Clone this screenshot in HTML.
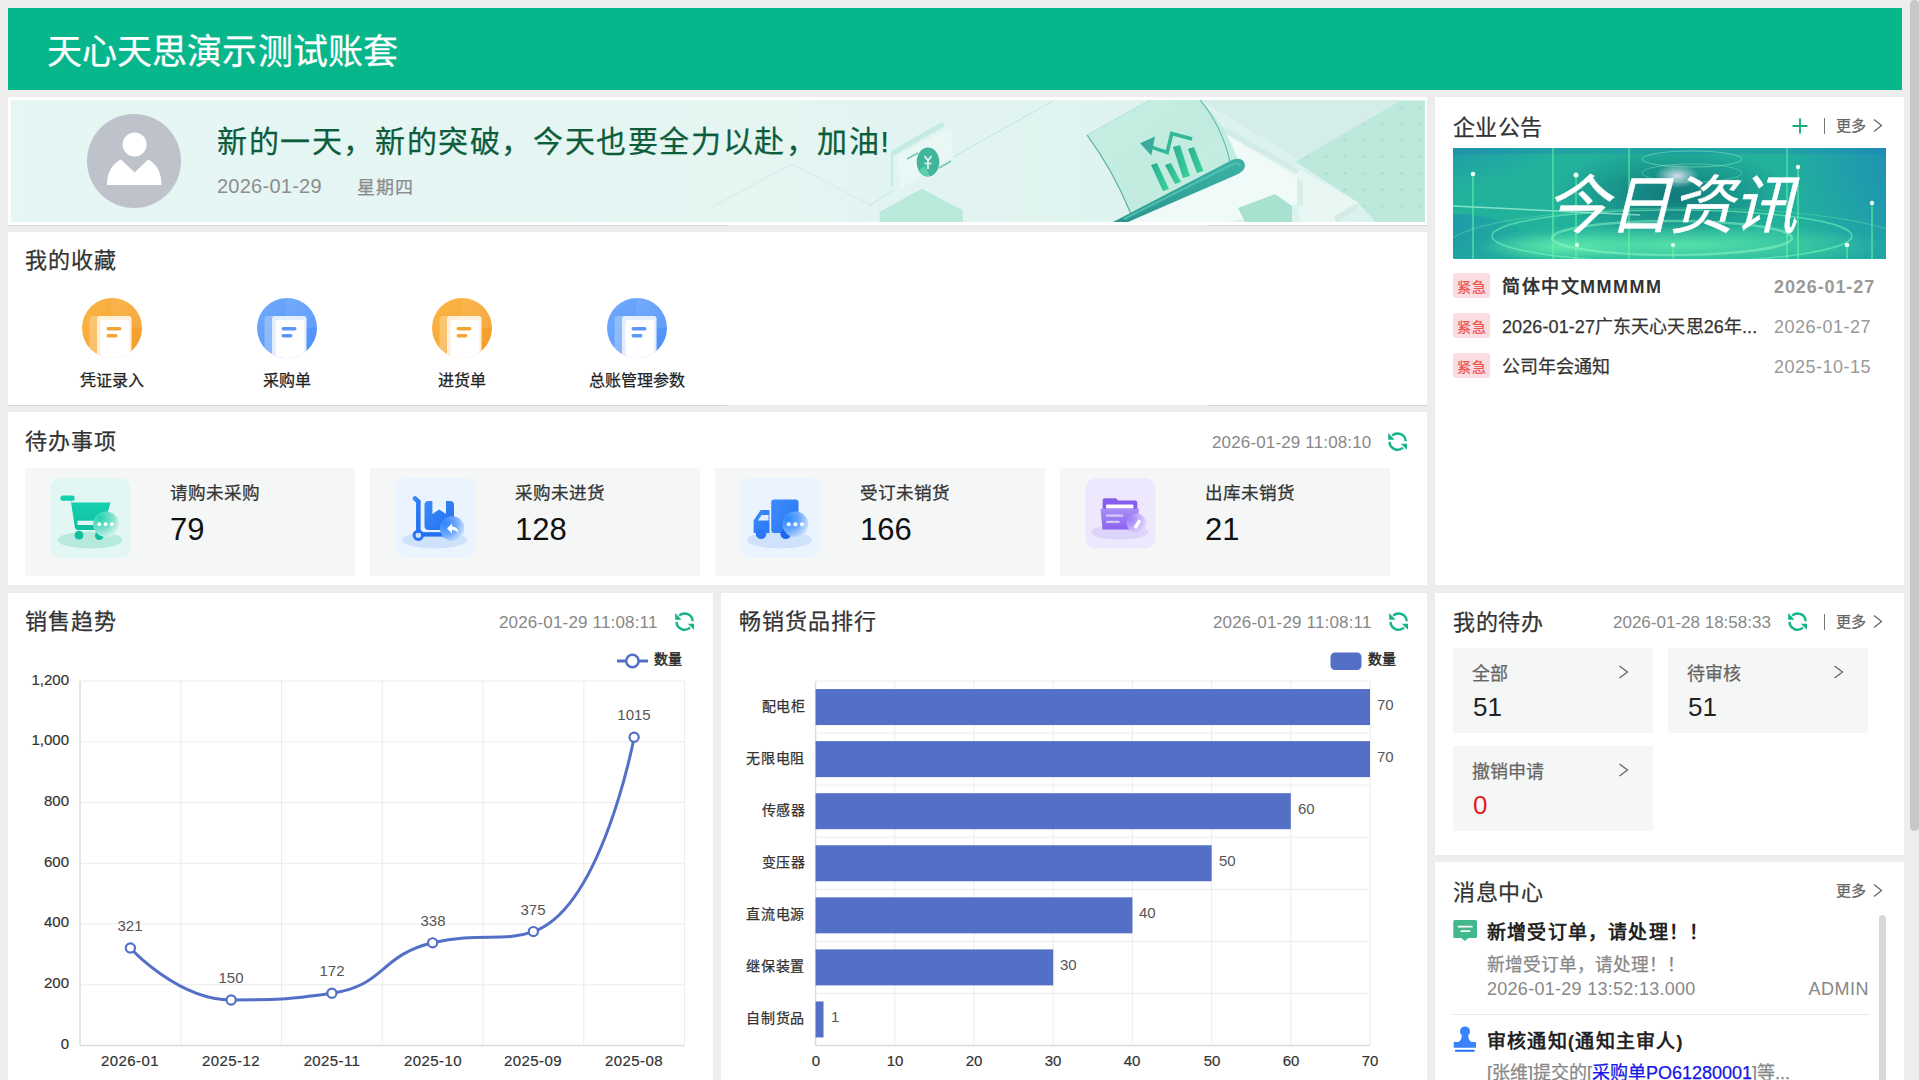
<!DOCTYPE html><html lang="zh-CN"><head><meta charset="utf-8"><style>
html,body{margin:0;padding:0;width:1919px;height:1080px;overflow:hidden;background:#ededed;font-family:"Liberation Sans",sans-serif;}
.t{position:absolute;white-space:nowrap;-webkit-text-stroke:0.25px currentColor;}
.r{position:absolute;}
svg{position:absolute;}
</style></head><body>
<div class="r" style="left:8px;top:8px;width:1894px;height:82px;background:#08b68b;"></div><div class="t" style="left:47px;top:34px;font-size:35px;line-height:35px;color:#fff;letter-spacing:0.1px;">天心天思演示测试账套</div><div class="r" style="left:8px;top:97px;width:1419px;height:128px;background:#fff;"></div><div class="r" style="left:8px;top:225px;width:719px;height:1px;background:#d4d4d4;"></div><div class="r" style="left:1207px;top:225px;width:220px;height:1px;background:#d4d4d4;"></div><div class="r" style="left:8px;top:232px;width:1419px;height:173px;background:#fff;"></div><div class="r" style="left:8px;top:405px;width:719px;height:1px;background:#d4d4d4;"></div><div class="r" style="left:1207px;top:405px;width:220px;height:1px;background:#d4d4d4;"></div><div class="r" style="left:8px;top:412px;width:1419px;height:173px;background:#fff;"></div><div class="r" style="left:8px;top:593px;width:705px;height:487px;background:#fff;"></div><div class="r" style="left:721px;top:593px;width:706px;height:487px;background:#fff;"></div><div class="r" style="left:1435px;top:97px;width:469px;height:488px;background:#fff;"></div><div class="r" style="left:1435px;top:593px;width:469px;height:262px;background:#fff;"></div><div class="r" style="left:1435px;top:862px;width:469px;height:218px;background:#fff;"></div><div class="r" style="left:1910px;top:0px;width:9px;height:831px;background:#c8c8c8;border-radius:5px;"></div><svg style="left:11px;top:100px" width="1414" height="122" viewBox="11 100 1414 122">
<defs>
<linearGradient id="bg1" x1="0" y1="0" x2="1" y2="0"><stop offset="0" stop-color="#e6f6f4"/><stop offset="0.55" stop-color="#e4f5f2"/><stop offset="1" stop-color="#d9f1ec"/></linearGradient>
<linearGradient id="rol" x1="0" y1="1" x2="0.3" y2="0"><stop offset="0" stop-color="#2a968f"/><stop offset="1" stop-color="#3aafa3"/></linearGradient>
<linearGradient id="bar" x1="0" y1="0" x2="1" y2="0"><stop offset="0" stop-color="#2eaa94"/><stop offset="1" stop-color="#39d69c"/></linearGradient>
<linearGradient id="ppr" x1="0" y1="0" x2="1" y2="1"><stop offset="0" stop-color="#c2ecdf"/><stop offset="1" stop-color="#b4e8d8"/></linearGradient>
<pattern id="dots" x="0" y="0" width="18.8" height="16.5" patternUnits="userSpaceOnUse"><path d="M8.5,9 l1.6,-1.3 l1.6,1.3" stroke="#8fd3c0" stroke-width="0.9" fill="none"/></pattern>
</defs>
<rect x="11" y="100" width="1414" height="122" fill="url(#bg1)"/>
<polygon points="1200,100 1425,100 1425,160 1300,160" fill="#d4ede8"/>
<line x1="1053" y1="101" x2="953" y2="157" stroke="#c2e5dd" stroke-width="1"/>
<line x1="869" y1="206" x2="895" y2="189" stroke="#c6e8e0" stroke-width="1"/>
<polyline points="712,207 792,164 872,206" stroke="#d2ebe5" stroke-width="1" fill="none"/>
<polygon points="891,151 942,122 945,126 893,156 893,186 891,187" fill="#c4eae2"/>
<polygon points="898.5,155.4 951.4,127.5 953,156.9 900,188.7" fill="#e9f8f5"/>
<ellipse cx="928" cy="162" rx="11.3" ry="14.4" fill="#40b59c"/>
<path d="M918,170 A11,14 0 0 0 930,176 L925,166 Z" fill="#5ccfae"/>
<path d="M924.5,156 L928,160.5 L931.5,156 M928,160.5 L928,169 M924.5,163.5 L931.5,163.5" stroke="#e6f7f1" stroke-width="1.7" fill="none"/>
<line x1="907" y1="159" x2="918" y2="153" stroke="#7cc5b4" stroke-width="1.6"/>
<line x1="939" y1="168" x2="951" y2="161" stroke="#7cc5b4" stroke-width="1.6"/>
<polygon points="879.6,212 922,188.7 962.8,210.6 962.8,222 879.6,222" fill="#b8e9db"/>
<polygon points="1295.7,161.5 1400,101 1425,101 1425,222 1375.8,222 1357.6,202.3" fill="#bde8dc"/>
<polygon points="1295.7,161.5 1400,101 1425,101 1425,222 1375.8,222 1357.6,202.3" fill="url(#dots)"/>
<polygon points="1224,126 1300,170 1357.6,202.3 1357.6,210 1336,222 1300,222 1297,178 1220,133" fill="#e9f7f4"/>
<polygon points="1224,126 1300,170 1296,174 1221,131" fill="#d3ece6"/>
<polygon points="1336,222 1357.6,210 1357.6,203 1334,216" fill="#d2ebe5"/>
<polygon points="1221,132 1297,178 1297,204 1230.7,222 1130,222" fill="#f0faf8"/>
<polygon points="1297,178 1303,181 1303,206 1297,204" fill="#d6efe9"/>
<polygon points="1238,208 1275,194 1292,206 1292,222 1245,222" fill="#a8e1d0"/>
<path d="M1087,135 Q1113,170 1131,214 L1240,165 Q1226,125 1200,100 L1150,100 Z" fill="url(#ppr)" fill-opacity="0.8"/>
<path d="M1087,135 Q1113,170 1131,214" stroke="#4fae9f" stroke-width="1.2" fill="none"/>
<path d="M1200,100 Q1222,126 1230,162" stroke="#5db8aa" stroke-width="1.1" fill="none"/>
<path d="M1087,135 L1150,100" stroke="#b0e2d6" stroke-width="1" fill="none"/>
<polygon points="1151,165 1157,163 1169,189 1163,191" fill="url(#bar)"/>
<polygon points="1165,165 1171,163 1181,182 1175,184" fill="url(#bar)"/>
<polygon points="1173,147 1180,145 1190,176 1183,178" fill="url(#bar)"/>
<polygon points="1188,149 1194,147 1203.5,171 1197,173" fill="url(#bar)"/>
<polyline points="1149,146.4 1167.2,152.4 1171.7,133.5 1192.1,139" stroke="#33b899" stroke-width="3.6" fill="none" stroke-linejoin="miter"/>
<polygon points="1140,143.3 1155,136.5 1151.3,155.4" fill="#3aab9a"/>
<path d="M1113,222 L1232,160 Q1244,156 1245,166 Q1244,172 1236,175 L1128,222 Z" fill="url(#rol)"/>
<path d="M1124,219 L1233,164 Q1240,162 1240,167" stroke="#55c4b5" stroke-width="2" fill="none" stroke-opacity="0.8"/>
</svg><svg style="left:86px;top:113px" width="96" height="96" viewBox="86 113 96 96">
<circle cx="134" cy="161" r="47" fill="#bec2cb"/>
<circle cx="134.6" cy="144.4" r="12" fill="#fff"/>
<path d="M107,185 C107,173 112,164 121,159.6 L134.6,172.5 L148,159.6 C157,164 161.5,173 161.5,185 Z" fill="#fff"/>
</svg><div class="t" style="left:217px;top:127px;font-size:30px;line-height:30px;color:#0d5c3c;letter-spacing:1.6px;">新的一天，新的突破，今天也要全力以赴，加油!</div><div class="t" style="left:217px;top:176px;font-size:20px;line-height:20px;color:#8d8d8d;letter-spacing:0.25px;-webkit-text-stroke:0;">2026-01-29</div><div class="t" style="left:357px;top:179px;font-size:18px;line-height:18px;color:#8d8d8d;letter-spacing:1px;">星期四</div><div class="t" style="left:25px;top:250px;font-size:22px;line-height:22px;color:#333;letter-spacing:1px;">我的收藏</div><svg style="left:81px;top:297px" width="62" height="62" viewBox="81 297 62 62">
<defs><linearGradient id="fg112" x1="0" y1="0" x2="1" y2="1"><stop offset="0" stop-color="#fbb848"/><stop offset="1" stop-color="#f39a23"/></linearGradient>
<clipPath id="cfg112"><circle cx="112" cy="328" r="30"/></clipPath></defs>
<circle cx="112" cy="328" r="30" fill="url(#fg112)"/>
<path d="M111,298 A30,30 0 0 1 142,328 L111,328 Z" fill="#fff" fill-opacity="0.08"/>
<g clip-path="url(#cfg112)">
<rect x="89.5" y="316" width="42" height="45" rx="3" fill="#fff" fill-opacity="0.28"/>
<rect x="97" y="316" width="34.5" height="45" rx="3" fill="#fff" fill-opacity="0.75"/>
<rect x="100.5" y="320" width="29" height="41" rx="3" fill="#fff"/>
</g>
<rect x="106.5" y="327" width="15" height="3.4" rx="1.7" fill="#f4a537"/>
<rect x="106.5" y="334" width="11" height="3.4" rx="1.7" fill="#f4a537"/>
</svg><div class="t" style="left:112px;top:373px;font-size:16px;line-height:16px;color:#222;transform:translateX(-50%);">凭证录入</div><svg style="left:256px;top:297px" width="62" height="62" viewBox="256 297 62 62">
<defs><linearGradient id="fg287" x1="0" y1="0" x2="1" y2="1"><stop offset="0" stop-color="#72acfc"/><stop offset="1" stop-color="#4a8df8"/></linearGradient>
<clipPath id="cfg287"><circle cx="287" cy="328" r="30"/></clipPath></defs>
<circle cx="287" cy="328" r="30" fill="url(#fg287)"/>
<path d="M286,298 A30,30 0 0 1 317,328 L286,328 Z" fill="#fff" fill-opacity="0.08"/>
<g clip-path="url(#cfg287)">
<rect x="264.5" y="316" width="42" height="45" rx="3" fill="#fff" fill-opacity="0.28"/>
<rect x="272" y="316" width="34.5" height="45" rx="3" fill="#fff" fill-opacity="0.75"/>
<rect x="275.5" y="320" width="29" height="41" rx="3" fill="#fff"/>
</g>
<rect x="281.5" y="327" width="15" height="3.4" rx="1.7" fill="#5b97f8"/>
<rect x="281.5" y="334" width="11" height="3.4" rx="1.7" fill="#5b97f8"/>
</svg><div class="t" style="left:287px;top:373px;font-size:16px;line-height:16px;color:#222;transform:translateX(-50%);">采购单</div><svg style="left:431px;top:297px" width="62" height="62" viewBox="431 297 62 62">
<defs><linearGradient id="fg462" x1="0" y1="0" x2="1" y2="1"><stop offset="0" stop-color="#fbb848"/><stop offset="1" stop-color="#f39a23"/></linearGradient>
<clipPath id="cfg462"><circle cx="462" cy="328" r="30"/></clipPath></defs>
<circle cx="462" cy="328" r="30" fill="url(#fg462)"/>
<path d="M461,298 A30,30 0 0 1 492,328 L461,328 Z" fill="#fff" fill-opacity="0.08"/>
<g clip-path="url(#cfg462)">
<rect x="439.5" y="316" width="42" height="45" rx="3" fill="#fff" fill-opacity="0.28"/>
<rect x="447" y="316" width="34.5" height="45" rx="3" fill="#fff" fill-opacity="0.75"/>
<rect x="450.5" y="320" width="29" height="41" rx="3" fill="#fff"/>
</g>
<rect x="456.5" y="327" width="15" height="3.4" rx="1.7" fill="#f4a537"/>
<rect x="456.5" y="334" width="11" height="3.4" rx="1.7" fill="#f4a537"/>
</svg><div class="t" style="left:462px;top:373px;font-size:16px;line-height:16px;color:#222;transform:translateX(-50%);">进货单</div><svg style="left:606px;top:297px" width="62" height="62" viewBox="606 297 62 62">
<defs><linearGradient id="fg637" x1="0" y1="0" x2="1" y2="1"><stop offset="0" stop-color="#72acfc"/><stop offset="1" stop-color="#4a8df8"/></linearGradient>
<clipPath id="cfg637"><circle cx="637" cy="328" r="30"/></clipPath></defs>
<circle cx="637" cy="328" r="30" fill="url(#fg637)"/>
<path d="M636,298 A30,30 0 0 1 667,328 L636,328 Z" fill="#fff" fill-opacity="0.08"/>
<g clip-path="url(#cfg637)">
<rect x="614.5" y="316" width="42" height="45" rx="3" fill="#fff" fill-opacity="0.28"/>
<rect x="622" y="316" width="34.5" height="45" rx="3" fill="#fff" fill-opacity="0.75"/>
<rect x="625.5" y="320" width="29" height="41" rx="3" fill="#fff"/>
</g>
<rect x="631.5" y="327" width="15" height="3.4" rx="1.7" fill="#5b97f8"/>
<rect x="631.5" y="334" width="11" height="3.4" rx="1.7" fill="#5b97f8"/>
</svg><div class="t" style="left:637px;top:373px;font-size:16px;line-height:16px;color:#222;transform:translateX(-50%);">总账管理参数</div><div class="t" style="left:25px;top:431px;font-size:22px;line-height:22px;color:#333;letter-spacing:1px;">待办事项</div><div class="t" style="left:1212px;top:434px;font-size:17px;line-height:17px;color:#888;letter-spacing:0.15px;-webkit-text-stroke:0;">2026-01-29 11:08:10</div><svg style="left:1383px;top:428px" width="28" height="28" viewBox="0 0 28 28">
<path d="M22.7,13.3 A8.1,8.1 0 0 0 9.2,7.6" stroke="#14b38a" stroke-width="2.4" fill="none"/>
<polygon points="5.2,5.0 5.2,11.8 11.6,11.8" fill="#14b38a"/>
<path d="M6.5,13.9 A8.1,8.1 0 0 0 20.0,19.6" stroke="#14b38a" stroke-width="2.4" fill="none"/>
<polygon points="17.8,15.8 24.0,15.8 24.0,21.8" fill="#14b38a"/>
</svg><div class="r" style="left:25px;top:468px;width:330px;height:108px;background:#f5f7f7;"></div><div class="t" style="left:170px;top:485px;font-size:17.6px;line-height:17.6px;color:#333;">请购未采购</div><div class="t" style="left:170px;top:514px;font-size:31px;line-height:31px;color:#111;-webkit-text-stroke:0;">79</div><div class="r" style="left:370px;top:468px;width:330px;height:108px;background:#f5f7f7;"></div><div class="t" style="left:515px;top:485px;font-size:17.6px;line-height:17.6px;color:#333;">采购未进货</div><div class="t" style="left:515px;top:514px;font-size:31px;line-height:31px;color:#111;-webkit-text-stroke:0;">128</div><div class="r" style="left:715px;top:468px;width:330px;height:108px;background:#f5f7f7;"></div><div class="t" style="left:860px;top:485px;font-size:17.6px;line-height:17.6px;color:#333;">受订未销货</div><div class="t" style="left:860px;top:514px;font-size:31px;line-height:31px;color:#111;-webkit-text-stroke:0;">166</div><div class="r" style="left:1060px;top:468px;width:330px;height:108px;background:#f5f7f7;"></div><div class="t" style="left:1205px;top:485px;font-size:17.6px;line-height:17.6px;color:#333;">出库未销货</div><div class="t" style="left:1205px;top:514px;font-size:31px;line-height:31px;color:#111;-webkit-text-stroke:0;">21</div><svg style="left:50px;top:478px" width="81" height="81" viewBox="0 0 81 81">
<defs><linearGradient id="cartg" x1="0" y1="0" x2="0" y2="1"><stop offset="0" stop-color="#14d2b3"/><stop offset="1" stop-color="#0fbe9e"/></linearGradient>
<radialGradient id="bubg" cx="0.25" cy="0.25" r="0.9"><stop offset="0" stop-color="#22d3b1"/><stop offset="0.55" stop-color="#7ee0cc"/><stop offset="1" stop-color="#e6f8f4"/></radialGradient></defs>
<rect x="0.5" y="0" width="80" height="80" rx="10" fill="#e2f6f3"/>
<ellipse cx="40" cy="62" rx="32.5" ry="8.4" fill="#b8e9dd"/>
<path d="M13,20.2 L22,20.2" stroke="url(#cartg)" stroke-width="5.2" stroke-linecap="round"/>
<path d="M20.5,21 L25,50 Q25.5,52 28,52 L52,52 L60.5,25 Q61,24.5 60,24.5 L21.5,24.5 Z" fill="url(#cartg)"/>
<rect x="27.5" y="42.7" width="17" height="4.3" fill="#e2f6f3"/>
<circle cx="29" cy="57.2" r="4.4" fill="#0fbf9f"/>
<circle cx="49.3" cy="57.6" r="4.4" fill="#0fbf9f"/>
<circle cx="56" cy="46.2" r="12.8" fill="url(#bubg)"/>
<circle cx="49.3" cy="46.2" r="1.9" fill="#fff"/><circle cx="55.6" cy="46.2" r="1.9" fill="#fff"/><circle cx="62" cy="46.2" r="1.9" fill="#fff"/>
</svg><svg style="left:395px;top:478px" width="81" height="81" viewBox="0 0 81 81">
<defs><linearGradient id="dolg" x1="0" y1="0" x2="1" y2="1"><stop offset="0" stop-color="#3a8bf8"/><stop offset="1" stop-color="#2370f2"/></linearGradient>
<radialGradient id="bub2" cx="0.2" cy="0.3" r="0.95"><stop offset="0" stop-color="#2b84ff"/><stop offset="0.5" stop-color="#6fa9fb"/><stop offset="1" stop-color="#e7f1fe"/></radialGradient></defs>
<rect x="0.5" y="0" width="80" height="80" rx="10" fill="#eaf3fe"/>
<ellipse cx="39.6" cy="62" rx="32.5" ry="8.4" fill="#cfe2fc"/>
<path d="M20,20.5 L23.3,23.5 L23.3,53" stroke="url(#dolg)" stroke-width="4.6" stroke-linecap="round" fill="none"/>
<circle cx="23.3" cy="57.2" r="4.2" stroke="#2874f3" stroke-width="3" fill="none"/>
<path d="M27.5,56.4 L49,56.4" stroke="#2370f2" stroke-width="4.4"/>
<path d="M33.5,22.9 L37.4,22.9 L37.4,36 L44.2,31.5 L51,36 L51,22.9 L55,22.9 Q59,22.9 59,27 L59,48 Q59,52 55,52 L33.5,52 Q29.5,52 29.5,48 L29.5,27 Q29.5,22.9 33.5,22.9 Z" fill="url(#dolg)"/>
<circle cx="57.2" cy="50.6" r="12.3" fill="url(#bub2)"/>
<path d="M52,50.6 L57,45.5 L57,48.5 Q63,48.5 63.5,55 Q61,51.5 57,52 L57,55.5 Z" fill="#fff"/>
</svg><svg style="left:740px;top:478px" width="81" height="81" viewBox="0 0 81 81">
<defs><linearGradient id="trg" x1="0" y1="0" x2="1" y2="1"><stop offset="0" stop-color="#3d8cfb"/><stop offset="1" stop-color="#2a77f6"/></linearGradient>
<radialGradient id="bub3" cx="0.2" cy="0.3" r="0.95"><stop offset="0" stop-color="#2b88ff"/><stop offset="0.5" stop-color="#6fabfb"/><stop offset="1" stop-color="#e7f1fe"/></radialGradient></defs>
<rect x="0.5" y="0" width="80" height="80" rx="10" fill="#eaf3fe"/>
<ellipse cx="39.6" cy="62" rx="32.5" ry="8.4" fill="#cfe2fc"/>
<rect x="31.2" y="21.5" width="27.3" height="33.4" rx="3" fill="url(#trg)"/>
<path d="M20.7,32.1 L29.5,32.1 L29.5,54.9 L13.6,54.9 L13.6,42.6 Z" fill="url(#trg)"/>
<path d="M21.5,36.9 L28.6,36.9 L28.6,42.6 L18,42.6 Z" fill="#e3eefd"/>
<circle cx="21.1" cy="55.8" r="5.3" fill="#2b78f6"/>
<circle cx="45.7" cy="55.8" r="5.3" fill="#1d67f0"/>
<circle cx="55.4" cy="46.2" r="12.8" fill="url(#bub3)"/>
<circle cx="48.8" cy="46.2" r="2" fill="#fff"/><circle cx="55.4" cy="46.2" r="2" fill="#fff"/><circle cx="62" cy="46.2" r="2" fill="#fff"/>
</svg><svg style="left:1085px;top:478px" width="71" height="71" viewBox="0 0 71 71">
<defs><linearGradient id="fog" x1="0" y1="0" x2="0" y2="1"><stop offset="0" stop-color="#a98ff8"/><stop offset="1" stop-color="#8a62f0"/></linearGradient>
<radialGradient id="bub4" cx="0.2" cy="0.3" r="0.95"><stop offset="0" stop-color="#a07ef8"/><stop offset="0.5" stop-color="#c3b0fa"/><stop offset="1" stop-color="#ece6fd"/></radialGradient></defs>
<rect x="0.5" y="0.5" width="70" height="70" rx="10" fill="#ede8fd"/>
<ellipse cx="34.7" cy="54.1" rx="28.6" ry="7.5" fill="#ddd4fb"/>
<path d="M19.6,20.2 L31,20.2 L33,22.5 L50.3,22.5 Q52.3,22.5 52.3,24.5 L52.3,32 L17.6,32 L17.6,22.2 Q17.6,20.2 19.6,20.2 Z" fill="#875ff0"/>
<rect x="21" y="26.4" width="27.4" height="4" rx="1" fill="#fff"/>
<path d="M15.5,30.8 L54,30.8 L51.9,51.5 L17.6,51.5 Z" fill="url(#fog)"/>
<rect x="21" y="36.5" width="17.3" height="2.2" rx="1" fill="#fff" fill-opacity="0.6"/>
<rect x="21" y="42.7" width="13.8" height="2.2" rx="1" fill="#fff" fill-opacity="0.6"/>
<circle cx="51.5" cy="45.3" r="9.7" fill="url(#bub4)"/>
<path d="M53.3,41.3 L56.3,43 L51.5,51 L48.5,49.3 Z" fill="#fff"/>
</svg><svg style="left:50px;top:478px" width="30" height="30" viewBox="0 0 30 30"><path d="M13,20.2 L22,20.2" stroke="#13d0b1" stroke-width="5.2" stroke-linecap="round"/></svg><div class="t" style="left:25px;top:611px;font-size:22px;line-height:22px;color:#333;letter-spacing:1px;">销售趋势</div><div class="t" style="left:499px;top:614px;font-size:17px;line-height:17px;color:#888;letter-spacing:0.17px;-webkit-text-stroke:0;">2026-01-29 11:08:11</div><svg style="left:670px;top:608px" width="28" height="28" viewBox="0 0 28 28">
<path d="M22.7,13.3 A8.1,8.1 0 0 0 9.2,7.6" stroke="#14b38a" stroke-width="2.4" fill="none"/>
<polygon points="5.2,5.0 5.2,11.8 11.6,11.8" fill="#14b38a"/>
<path d="M6.5,13.9 A8.1,8.1 0 0 0 20.0,19.6" stroke="#14b38a" stroke-width="2.4" fill="none"/>
<polygon points="17.8,15.8 24.0,15.8 24.0,21.8" fill="#14b38a"/>
</svg><div class="t" style="left:739px;top:611px;font-size:22px;line-height:22px;color:#333;letter-spacing:1px;">畅销货品排行</div><div class="t" style="left:1213px;top:614px;font-size:17px;line-height:17px;color:#888;letter-spacing:0.17px;-webkit-text-stroke:0;">2026-01-29 11:08:11</div><svg style="left:1384px;top:608px" width="28" height="28" viewBox="0 0 28 28">
<path d="M22.7,13.3 A8.1,8.1 0 0 0 9.2,7.6" stroke="#14b38a" stroke-width="2.4" fill="none"/>
<polygon points="5.2,5.0 5.2,11.8 11.6,11.8" fill="#14b38a"/>
<path d="M6.5,13.9 A8.1,8.1 0 0 0 20.0,19.6" stroke="#14b38a" stroke-width="2.4" fill="none"/>
<polygon points="17.8,15.8 24.0,15.8 24.0,21.8" fill="#14b38a"/>
</svg><svg style="left:0px;top:593px" width="713" height="487" viewBox="0 593 713 487"><line x1="80" y1="1045.50" x2="684.5" y2="1045.50" stroke="#ececec" stroke-width="1"/><line x1="80" y1="984.75" x2="684.5" y2="984.75" stroke="#ececec" stroke-width="1"/><line x1="80" y1="924.00" x2="684.5" y2="924.00" stroke="#ececec" stroke-width="1"/><line x1="80" y1="863.25" x2="684.5" y2="863.25" stroke="#ececec" stroke-width="1"/><line x1="80" y1="802.50" x2="684.5" y2="802.50" stroke="#ececec" stroke-width="1"/><line x1="80" y1="741.75" x2="684.5" y2="741.75" stroke="#ececec" stroke-width="1"/><line x1="80" y1="681.00" x2="684.5" y2="681.00" stroke="#ececec" stroke-width="1"/><line x1="180.75" y1="681" x2="180.75" y2="1045.5" stroke="#ececec" stroke-width="1"/><line x1="281.50" y1="681" x2="281.50" y2="1045.5" stroke="#ececec" stroke-width="1"/><line x1="382.25" y1="681" x2="382.25" y2="1045.5" stroke="#ececec" stroke-width="1"/><line x1="483.00" y1="681" x2="483.00" y2="1045.5" stroke="#ececec" stroke-width="1"/><line x1="583.75" y1="681" x2="583.75" y2="1045.5" stroke="#ececec" stroke-width="1"/><line x1="684.50" y1="681" x2="684.50" y2="1045.5" stroke="#ececec" stroke-width="1"/><line x1="80" y1="681" x2="80" y2="1045.5" stroke="#dcdcdc" stroke-width="1.5"/><line x1="80" y1="1045.5" x2="684.5" y2="1045.5" stroke="#dcdcdc" stroke-width="1.5"/><path d="M130.38,948.00 C130.38,948.00 177.84,999.94 231.12,999.94 C278.59,999.94 284.26,999.94 331.88,993.25 C385.01,985.80 379.59,955.32 432.62,942.83 C480.34,931.59 501.49,942.83 533.38,931.59 C602.24,907.32 634.12,737.19 634.12,737.19" stroke="#5470c6" stroke-width="3" fill="none"/><circle cx="130.38" cy="948.00" r="4.6" fill="#fff" stroke="#5470c6" stroke-width="2.2"/><circle cx="231.12" cy="999.94" r="4.6" fill="#fff" stroke="#5470c6" stroke-width="2.2"/><circle cx="331.88" cy="993.25" r="4.6" fill="#fff" stroke="#5470c6" stroke-width="2.2"/><circle cx="432.62" cy="942.83" r="4.6" fill="#fff" stroke="#5470c6" stroke-width="2.2"/><circle cx="533.38" cy="931.59" r="4.6" fill="#fff" stroke="#5470c6" stroke-width="2.2"/><circle cx="634.12" cy="737.19" r="4.6" fill="#fff" stroke="#5470c6" stroke-width="2.2"/><line x1="617" y1="661" x2="648" y2="661" stroke="#5470c6" stroke-width="3"/><circle cx="632.4" cy="661" r="6.2" fill="#fff" stroke="#5470c6" stroke-width="2.6"/></svg><div class="t" style="left:654px;top:652px;font-size:14px;line-height:14px;color:#333;font-weight:bold;-webkit-text-stroke:0;">数量</div><div class="t" style="right:1850px;top:1036px;font-size:15px;line-height:15px;color:#333;-webkit-text-stroke:0;-webkit-text-stroke:0.2px #333;">0</div><div class="t" style="right:1850px;top:975px;font-size:15px;line-height:15px;color:#333;-webkit-text-stroke:0;-webkit-text-stroke:0.2px #333;">200</div><div class="t" style="right:1850px;top:914px;font-size:15px;line-height:15px;color:#333;-webkit-text-stroke:0;-webkit-text-stroke:0.2px #333;">400</div><div class="t" style="right:1850px;top:854px;font-size:15px;line-height:15px;color:#333;-webkit-text-stroke:0;-webkit-text-stroke:0.2px #333;">600</div><div class="t" style="right:1850px;top:793px;font-size:15px;line-height:15px;color:#333;-webkit-text-stroke:0;-webkit-text-stroke:0.2px #333;">800</div><div class="t" style="right:1850px;top:732px;font-size:15px;line-height:15px;color:#333;-webkit-text-stroke:0;-webkit-text-stroke:0.2px #333;">1,000</div><div class="t" style="right:1850px;top:672px;font-size:15px;line-height:15px;color:#333;-webkit-text-stroke:0;-webkit-text-stroke:0.2px #333;">1,200</div><div class="t" style="left:130px;top:1053px;font-size:15px;line-height:15px;color:#333;letter-spacing:0.4px;transform:translateX(-50%);-webkit-text-stroke:0;-webkit-text-stroke:0.2px #333;">2026-01</div><div class="t" style="left:231px;top:1053px;font-size:15px;line-height:15px;color:#333;letter-spacing:0.4px;transform:translateX(-50%);-webkit-text-stroke:0;-webkit-text-stroke:0.2px #333;">2025-12</div><div class="t" style="left:332px;top:1053px;font-size:15px;line-height:15px;color:#333;letter-spacing:0.4px;transform:translateX(-50%);-webkit-text-stroke:0;-webkit-text-stroke:0.2px #333;">2025-11</div><div class="t" style="left:433px;top:1053px;font-size:15px;line-height:15px;color:#333;letter-spacing:0.4px;transform:translateX(-50%);-webkit-text-stroke:0;-webkit-text-stroke:0.2px #333;">2025-10</div><div class="t" style="left:533px;top:1053px;font-size:15px;line-height:15px;color:#333;letter-spacing:0.4px;transform:translateX(-50%);-webkit-text-stroke:0;-webkit-text-stroke:0.2px #333;">2025-09</div><div class="t" style="left:634px;top:1053px;font-size:15px;line-height:15px;color:#333;letter-spacing:0.4px;transform:translateX(-50%);-webkit-text-stroke:0;-webkit-text-stroke:0.2px #333;">2025-08</div><div class="t" style="left:130px;top:918px;font-size:15px;line-height:15px;color:#555;transform:translateX(-50%);-webkit-text-stroke:0;">321</div><div class="t" style="left:231px;top:970px;font-size:15px;line-height:15px;color:#555;transform:translateX(-50%);-webkit-text-stroke:0;">150</div><div class="t" style="left:332px;top:963px;font-size:15px;line-height:15px;color:#555;transform:translateX(-50%);-webkit-text-stroke:0;">172</div><div class="t" style="left:433px;top:913px;font-size:15px;line-height:15px;color:#555;transform:translateX(-50%);-webkit-text-stroke:0;">338</div><div class="t" style="left:533px;top:902px;font-size:15px;line-height:15px;color:#555;transform:translateX(-50%);-webkit-text-stroke:0;">375</div><div class="t" style="left:634px;top:707px;font-size:15px;line-height:15px;color:#555;transform:translateX(-50%);-webkit-text-stroke:0;">1015</div><svg style="left:721px;top:593px" width="706" height="487" viewBox="721 593 706 487"><line x1="815.6" y1="681.00" x2="1370" y2="681.00" stroke="#ececec" stroke-width="1"/><line x1="815.6" y1="733.07" x2="1370" y2="733.07" stroke="#ececec" stroke-width="1"/><line x1="815.6" y1="785.14" x2="1370" y2="785.14" stroke="#ececec" stroke-width="1"/><line x1="815.6" y1="837.21" x2="1370" y2="837.21" stroke="#ececec" stroke-width="1"/><line x1="815.6" y1="889.29" x2="1370" y2="889.29" stroke="#ececec" stroke-width="1"/><line x1="815.6" y1="941.36" x2="1370" y2="941.36" stroke="#ececec" stroke-width="1"/><line x1="815.6" y1="993.43" x2="1370" y2="993.43" stroke="#ececec" stroke-width="1"/><line x1="815.6" y1="1045.50" x2="1370" y2="1045.50" stroke="#ececec" stroke-width="1"/><line x1="894.80" y1="681" x2="894.80" y2="1045.5" stroke="#ececec" stroke-width="1"/><line x1="974.00" y1="681" x2="974.00" y2="1045.5" stroke="#ececec" stroke-width="1"/><line x1="1053.20" y1="681" x2="1053.20" y2="1045.5" stroke="#ececec" stroke-width="1"/><line x1="1132.40" y1="681" x2="1132.40" y2="1045.5" stroke="#ececec" stroke-width="1"/><line x1="1211.60" y1="681" x2="1211.60" y2="1045.5" stroke="#ececec" stroke-width="1"/><line x1="1290.80" y1="681" x2="1290.80" y2="1045.5" stroke="#ececec" stroke-width="1"/><line x1="1370.00" y1="681" x2="1370.00" y2="1045.5" stroke="#ececec" stroke-width="1"/><line x1="815.6" y1="681" x2="815.6" y2="1045.5" stroke="#dcdcdc" stroke-width="1.5"/><line x1="815.6" y1="1045.5" x2="1370" y2="1045.5" stroke="#dcdcdc" stroke-width="1.5"/><rect x="815.6" y="689.04" width="554.40" height="36" fill="#5470c6"/><rect x="815.6" y="741.11" width="554.40" height="36" fill="#5470c6"/><rect x="815.6" y="793.18" width="475.20" height="36" fill="#5470c6"/><rect x="815.6" y="845.25" width="396.00" height="36" fill="#5470c6"/><rect x="815.6" y="897.32" width="316.80" height="36" fill="#5470c6"/><rect x="815.6" y="949.39" width="237.60" height="36" fill="#5470c6"/><rect x="815.6" y="1001.46" width="7.92" height="36" fill="#5470c6"/><rect x="1330.5" y="652.5" width="31" height="17.5" rx="4.5" fill="#5470c6"/></svg><div class="t" style="left:1368px;top:652px;font-size:14px;line-height:14px;color:#333;font-weight:bold;-webkit-text-stroke:0;">数量</div><div class="t" style="right:1114px;top:699px;font-size:14px;line-height:14px;color:#333;letter-spacing:0.5px;">配电柜</div><div class="t" style="left:1377px;top:697px;font-size:15px;line-height:15px;color:#555;-webkit-text-stroke:0;">70</div><div class="t" style="right:1114px;top:751px;font-size:14px;line-height:14px;color:#333;letter-spacing:0.7px;">无限电阻</div><div class="t" style="left:1377px;top:749px;font-size:15px;line-height:15px;color:#555;-webkit-text-stroke:0;">70</div><div class="t" style="right:1114px;top:803px;font-size:14px;line-height:14px;color:#333;letter-spacing:0.5px;">传感器</div><div class="t" style="left:1298px;top:801px;font-size:15px;line-height:15px;color:#555;-webkit-text-stroke:0;">60</div><div class="t" style="right:1114px;top:855px;font-size:14px;line-height:14px;color:#333;letter-spacing:0.5px;">变压器</div><div class="t" style="left:1219px;top:853px;font-size:15px;line-height:15px;color:#555;-webkit-text-stroke:0;">50</div><div class="t" style="right:1114px;top:907px;font-size:14px;line-height:14px;color:#333;letter-spacing:0.7px;">直流电源</div><div class="t" style="left:1139px;top:905px;font-size:15px;line-height:15px;color:#555;-webkit-text-stroke:0;">40</div><div class="t" style="right:1114px;top:959px;font-size:14px;line-height:14px;color:#333;letter-spacing:0.7px;">继保装置</div><div class="t" style="left:1060px;top:957px;font-size:15px;line-height:15px;color:#555;-webkit-text-stroke:0;">30</div><div class="t" style="right:1114px;top:1011px;font-size:14px;line-height:14px;color:#333;letter-spacing:0.7px;">自制货品</div><div class="t" style="left:831px;top:1009px;font-size:15px;line-height:15px;color:#555;-webkit-text-stroke:0;">1</div><div class="t" style="left:816px;top:1053px;font-size:15px;line-height:15px;color:#333;transform:translateX(-50%);-webkit-text-stroke:0;-webkit-text-stroke:0.2px #333;">0</div><div class="t" style="left:895px;top:1053px;font-size:15px;line-height:15px;color:#333;transform:translateX(-50%);-webkit-text-stroke:0;-webkit-text-stroke:0.2px #333;">10</div><div class="t" style="left:974px;top:1053px;font-size:15px;line-height:15px;color:#333;transform:translateX(-50%);-webkit-text-stroke:0;-webkit-text-stroke:0.2px #333;">20</div><div class="t" style="left:1053px;top:1053px;font-size:15px;line-height:15px;color:#333;transform:translateX(-50%);-webkit-text-stroke:0;-webkit-text-stroke:0.2px #333;">30</div><div class="t" style="left:1132px;top:1053px;font-size:15px;line-height:15px;color:#333;transform:translateX(-50%);-webkit-text-stroke:0;-webkit-text-stroke:0.2px #333;">40</div><div class="t" style="left:1212px;top:1053px;font-size:15px;line-height:15px;color:#333;transform:translateX(-50%);-webkit-text-stroke:0;-webkit-text-stroke:0.2px #333;">50</div><div class="t" style="left:1291px;top:1053px;font-size:15px;line-height:15px;color:#333;transform:translateX(-50%);-webkit-text-stroke:0;-webkit-text-stroke:0.2px #333;">60</div><div class="t" style="left:1370px;top:1053px;font-size:15px;line-height:15px;color:#333;transform:translateX(-50%);-webkit-text-stroke:0;-webkit-text-stroke:0.2px #333;">70</div><div class="t" style="left:1453px;top:117px;font-size:22px;line-height:22px;color:#333;letter-spacing:0.4px;">企业公告</div><svg style="left:1790px;top:116px" width="20" height="20" viewBox="0 0 20 20"><path d="M10,2.5 L10,17.5 M2.5,10 L17.5,10" stroke="#15a97b" stroke-width="1.8"/></svg><div class="r" style="left:1824px;top:118px;width:1.3px;height:16px;background:#777;"></div><div class="t" style="left:1836px;top:118px;font-size:15px;line-height:15px;color:#666;">更多</div><svg style="left:1872px;top:118px" width="12" height="16" viewBox="0 0 12 16"><path d="M2,1.5 L9.5,7.5 L2,13.5" stroke="#666" stroke-width="1.3" fill="none"/></svg><svg style="left:1453px;top:148px" width="433" height="111" viewBox="1453 148 433 111">
<defs>
<radialGradient id="nbl" cx="0" cy="0" r="1"><stop offset="0" stop-color="#1a68c2" stop-opacity="0.95"/><stop offset="1" stop-color="#1a68c2" stop-opacity="0"/></radialGradient>
<radialGradient id="nbr" cx="1" cy="0.3" r="1"><stop offset="0" stop-color="#1c6fcc" stop-opacity="0.9"/><stop offset="1" stop-color="#1c6fcc" stop-opacity="0"/></radialGradient>
<radialGradient id="ndk" cx="0.5" cy="0.5" r="0.5"><stop offset="0" stop-color="#0f6f76" stop-opacity="0.85"/><stop offset="1" stop-color="#0f6f76" stop-opacity="0"/></radialGradient>
<radialGradient id="ngr" cx="0.5" cy="0.5" r="0.5"><stop offset="0" stop-color="#6cf5b0" stop-opacity="0.7"/><stop offset="1" stop-color="#6cf5b0" stop-opacity="0"/></radialGradient>
<radialGradient id="nwh" cx="0.5" cy="0.5" r="0.5"><stop offset="0" stop-color="#e8e8f5" stop-opacity="0.9"/><stop offset="1" stop-color="#e8e8f5" stop-opacity="0"/></radialGradient>
</defs>
<rect x="1453" y="148" width="433" height="111" fill="#22b29c"/>
<ellipse cx="1460" cy="150" rx="150" ry="55" fill="url(#nbl)"/>
<ellipse cx="1453" cy="259" rx="90" ry="45" fill="url(#nbl)" opacity="0.7"/>
<rect x="1453" y="148" width="433" height="6" fill="#1a72c0" opacity="0.22"/>
<ellipse cx="1886" cy="185" rx="110" ry="90" fill="url(#nbr)"/>
<ellipse cx="1672" cy="195" rx="120" ry="50" fill="url(#ndk)"/>
<ellipse cx="1680" cy="245" rx="210" ry="22" fill="url(#ngr)"/>
<ellipse cx="1563" cy="247" rx="80" ry="14" fill="url(#ngr)"/>
<ellipse cx="1677" cy="176" rx="22" ry="12" fill="url(#nwh)"/>
<ellipse cx="1672" cy="236" rx="180" ry="26" stroke="#7ef8c0" stroke-opacity="0.55" stroke-width="1.5" fill="none"/>
<ellipse cx="1672" cy="238" rx="120" ry="17" stroke="#8ffac8" stroke-opacity="0.5" stroke-width="2.5" fill="none"/>
<ellipse cx="1680" cy="248" rx="235" ry="40" stroke="#5fe6a8" stroke-opacity="0.4" stroke-width="1.2" fill="none"/>
<ellipse cx="1692" cy="159" rx="50" ry="8" stroke="#9ff5d0" stroke-opacity="0.45" stroke-width="1" fill="none"/>
<ellipse cx="1692" cy="173" rx="50" ry="9" stroke="#9ff5d0" stroke-opacity="0.35" stroke-width="1" fill="none"/>
<path d="M1453,206 Q1540,210 1640,215" stroke="#c8ffe8" stroke-opacity="0.6" stroke-width="1.5" fill="none"/>
<g stroke="#6dfaa5" stroke-opacity="0.8" stroke-width="1.2">
<line x1="1473" y1="174" x2="1473" y2="259"/><line x1="1576" y1="176" x2="1576" y2="259"/>
<line x1="1553" y1="148" x2="1553" y2="259"/><line x1="1629" y1="148" x2="1629" y2="259"/><line x1="1787" y1="148" x2="1787" y2="259"/>
<line x1="1798" y1="168" x2="1798" y2="259"/><line x1="1872" y1="204" x2="1872" y2="259"/><line x1="1847" y1="246" x2="1847" y2="259"/>
<line x1="1673" y1="245" x2="1673" y2="259"/>
</g>
<g fill="#eafff2">
<circle cx="1473" cy="174" r="2.3"/><circle cx="1576" cy="175" r="2.5"/><circle cx="1798" cy="167" r="2.2"/><circle cx="1872" cy="203" r="2.2"/><circle cx="1847" cy="245" r="2.3"/><circle cx="1577" cy="245" r="2"/><circle cx="1673" cy="245" r="2"/>
</g>
</svg><div class="t" style="left:1545px;top:174px;font-size:64px;line-height:64px;color:#fff;letter-spacing:-1.5px;font-style:italic;-webkit-text-stroke:0.45px #fff;">今日资讯</div><div class="r" style="left:1453px;top:273px;width:37px;height:25px;background:#f9dde0;border-radius:3px;"></div><div class="t" style="left:1457px;top:280px;font-size:14px;line-height:14px;color:#f24e4e;letter-spacing:0.6px;">紧急</div><div class="t" style="left:1502px;top:278px;font-size:18px;line-height:18px;color:#333;font-weight:bold;letter-spacing:1.5px;-webkit-text-stroke:0;">简体中文MMMMM</div><div class="t" style="left:1774px;top:278px;font-size:18px;line-height:18px;color:#999;font-weight:bold;letter-spacing:0.9px;-webkit-text-stroke:0;">2026-01-27</div><div class="r" style="left:1453px;top:313px;width:37px;height:25px;background:#f9dde0;border-radius:3px;"></div><div class="t" style="left:1457px;top:320px;font-size:14px;line-height:14px;color:#f24e4e;letter-spacing:0.6px;">紧急</div><div class="t" style="left:1502px;top:318px;font-size:18px;line-height:18px;color:#333;letter-spacing:0.1px;">2026-01-27广东天心天思26年...</div><div class="t" style="left:1774px;top:318px;font-size:18px;line-height:18px;color:#999;letter-spacing:0.5px;-webkit-text-stroke:0;">2026-01-27</div><div class="r" style="left:1453px;top:353px;width:37px;height:25px;background:#f9dde0;border-radius:3px;"></div><div class="t" style="left:1457px;top:360px;font-size:14px;line-height:14px;color:#f24e4e;letter-spacing:0.6px;">紧急</div><div class="t" style="left:1502px;top:358px;font-size:18px;line-height:18px;color:#333;letter-spacing:0.1px;">公司年会通知</div><div class="t" style="left:1774px;top:358px;font-size:18px;line-height:18px;color:#999;letter-spacing:0.5px;-webkit-text-stroke:0;">2025-10-15</div><div class="t" style="left:1453px;top:612px;font-size:22px;line-height:22px;color:#333;letter-spacing:0.7px;">我的待办</div><div class="t" style="left:1613px;top:614px;font-size:17px;line-height:17px;color:#888;-webkit-text-stroke:0;">2026-01-28 18:58:33</div><svg style="left:1783px;top:608px" width="28" height="28" viewBox="0 0 28 28">
<path d="M22.7,13.3 A8.1,8.1 0 0 0 9.2,7.6" stroke="#14b38a" stroke-width="2.4" fill="none"/>
<polygon points="5.2,5.0 5.2,11.8 11.6,11.8" fill="#14b38a"/>
<path d="M6.5,13.9 A8.1,8.1 0 0 0 20.0,19.6" stroke="#14b38a" stroke-width="2.4" fill="none"/>
<polygon points="17.8,15.8 24.0,15.8 24.0,21.8" fill="#14b38a"/>
</svg><div class="r" style="left:1824px;top:614px;width:1.3px;height:16px;background:#777;"></div><div class="t" style="left:1836px;top:614px;font-size:15px;line-height:15px;color:#666;">更多</div><svg style="left:1872px;top:614px" width="12" height="16" viewBox="0 0 12 16"><path d="M2,1.5 L9.5,7.5 L2,13.5" stroke="#666" stroke-width="1.3" fill="none"/></svg><div class="r" style="left:1453px;top:648px;width:200px;height:85px;background:#f5f7f7;"></div><div class="t" style="left:1472px;top:665px;font-size:18px;line-height:18px;color:#666;">全部</div><svg style="left:1617px;top:664px" width="14" height="16" viewBox="0 0 14 16"><path d="M2.5,2 L10.5,8 L2.5,14" stroke="#666" stroke-width="1.3" fill="none"/></svg><div class="t" style="left:1473px;top:694px;font-size:26px;line-height:26px;color:#222;-webkit-text-stroke:0;">51</div><div class="r" style="left:1668px;top:648px;width:200px;height:85px;background:#f5f7f7;"></div><div class="t" style="left:1687px;top:665px;font-size:18px;line-height:18px;color:#666;">待审核</div><svg style="left:1832px;top:664px" width="14" height="16" viewBox="0 0 14 16"><path d="M2.5,2 L10.5,8 L2.5,14" stroke="#666" stroke-width="1.3" fill="none"/></svg><div class="t" style="left:1688px;top:694px;font-size:26px;line-height:26px;color:#222;-webkit-text-stroke:0;">51</div><div class="r" style="left:1453px;top:746px;width:200px;height:85px;background:#f5f7f7;"></div><div class="t" style="left:1472px;top:763px;font-size:18px;line-height:18px;color:#666;">撤销申请</div><svg style="left:1617px;top:762px" width="14" height="16" viewBox="0 0 14 16"><path d="M2.5,2 L10.5,8 L2.5,14" stroke="#666" stroke-width="1.3" fill="none"/></svg><div class="t" style="left:1473px;top:792px;font-size:26px;line-height:26px;color:#e02020;-webkit-text-stroke:0;">0</div><div class="t" style="left:1453px;top:882px;font-size:22px;line-height:22px;color:#333;letter-spacing:0.7px;">消息中心</div><div class="t" style="left:1836px;top:883px;font-size:15px;line-height:15px;color:#666;">更多</div><svg style="left:1872px;top:883px" width="12" height="16" viewBox="0 0 12 16"><path d="M2,1.5 L9.5,7.5 L2,13.5" stroke="#666" stroke-width="1.3" fill="none"/></svg><div class="r" style="left:1879px;top:915px;width:7px;height:175px;background:#d8d8d8;border-radius:3.5px;"></div><svg style="left:1448px;top:915px" width="34" height="30" viewBox="0 0 34 30">
<path d="M6.8,5 L27.5,5 Q29,5 29,6.5 L29,21.6 Q29,23.1 27.5,23.1 L20.3,23.1 L16.9,26 L13.3,23.1 L6.8,23.1 Q5.3,23.1 5.3,21.6 L5.3,6.5 Q5.3,5 6.8,5 Z" fill="#42b78b"/>
<rect x="9.7" y="10.8" width="15" height="1.8" rx="0.9" fill="#fff"/>
<rect x="12.5" y="15.2" width="10" height="1.8" rx="0.9" fill="#fff"/>
</svg><div class="t" style="left:1487px;top:923px;font-size:19px;line-height:19px;color:#222;font-weight:bold;letter-spacing:1.2px;-webkit-text-stroke:0;">新增受订单，请处理！！</div><div class="t" style="left:1487px;top:957px;font-size:17.7px;line-height:17.7px;color:#888;">新增受订单，请处理！！</div><div class="t" style="left:1487px;top:980px;font-size:18px;line-height:18px;color:#888;letter-spacing:0.28px;-webkit-text-stroke:0;">2026-01-29 13:52:13.000</div><div class="t" style="right:50px;top:980px;font-size:18px;line-height:18px;color:#888;letter-spacing:0.5px;-webkit-text-stroke:0;">ADMIN</div><div class="r" style="left:1453px;top:1014px;width:416px;height:1px;background:#e6e6e6;"></div><svg style="left:1448px;top:1022px" width="34" height="34" viewBox="0 0 34 34">
<circle cx="17" cy="9.4" r="5" fill="#3a82fb"/>
<path d="M13.9,13 L20.2,13 Q20,18 23.3,20 L13.5,20 L10.4,20 Q14,18 13.9,13 Z" fill="#3a82fb"/>
<rect x="5.7" y="20" width="22.3" height="5.8" rx="0.6" fill="#3a82fb"/>
<rect x="6.9" y="27.7" width="19.9" height="2.1" rx="1" fill="#2070ff"/>
</svg><div class="t" style="left:1487px;top:1032px;font-size:19px;line-height:19px;color:#222;font-weight:bold;letter-spacing:1.2px;-webkit-text-stroke:0;">审核通知(通知主审人)</div><div class="t" style="left:1487px;top:1064px;font-size:18px;line-height:18px;color:#888">[张维]提交的[<span style="color:#1515e8">采购单PO61280001</span>]等...</div></body></html>
